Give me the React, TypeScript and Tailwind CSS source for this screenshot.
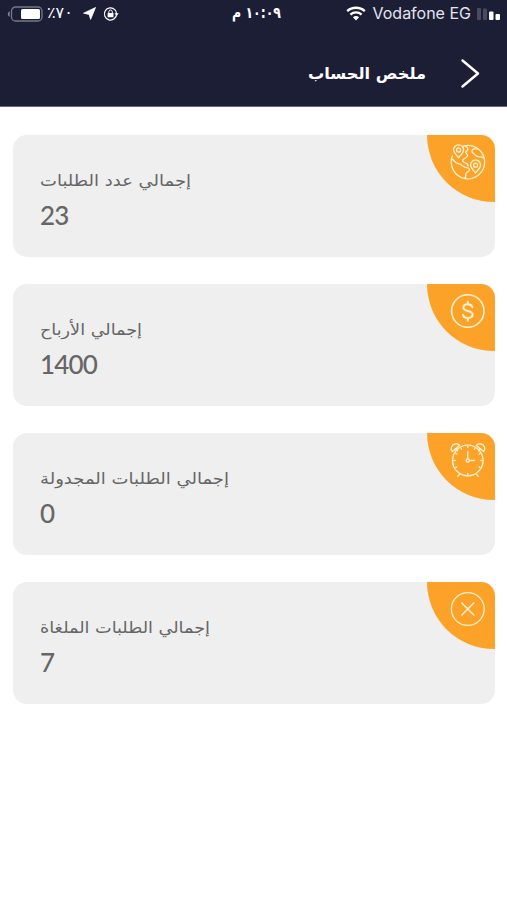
import type { ReactNode } from "react";

function BatteryIcon() {
  return (
    <svg width="36" height="16" viewBox="0 0 36 16" className="shrink-0">
      <path d="M2.6 5.2C.2 6.2.2 9.8 2.6 10.8Z" fill="#85869a" />
      <rect x="4.5" y="1" width="30.5" height="14" rx="4" fill="none" stroke="#77788b" strokeWidth="1.3" />
      <rect x="14" y="3" width="19" height="10" rx="1.5" fill="#fff" />
    </svg>
  );
}

function LocationIcon() {
  return (
    <svg width="13" height="13" viewBox="0 0 13 13" className="block shrink-0">
      <path d="M12.5.5 7.6 12.4 6.2 7.4.6 6.2Z" fill="#fff" stroke="#fff" strokeWidth=".8" strokeLinejoin="round" />
    </svg>
  );
}

function RotationLockIcon() {
  return (
    <svg width="16" height="16" viewBox="0 0 16 16" fill="none" stroke="#fff" className="block shrink-0">
      <path d="M13.6 8A6.1 6.1 0 1 1 11.8 3.6 6.1 6.1 0 0 1 13.6 8" strokeWidth="1.2" />
      <path d="M11.4 7.3h4.3l-2.1 2.6Z" fill="#fff" stroke="none" />
      <rect x="4.6" y="7" width="5.9" height="4.3" rx=".6" fill="#fff" stroke="none" />
      <path d="M5.8 7V5.8a1.75 1.75 0 0 1 3.5 0V7" strokeWidth="1" />
    </svg>
  );
}

function WifiIcon() {
  return (
    <svg width="20" height="15" viewBox="0 0 20 15" fill="none" stroke="#fff" className="shrink-0">
      <path d="M1.2 5.2C6 .6 14 .6 18.8 5.2" strokeWidth="2.3" />
      <path d="M4.4 8.6C7.5 5.7 12.5 5.7 15.6 8.6" strokeWidth="2.2" />
      <path d="M10 14.4 6.9 11.2c1.7-1.6 4.5-1.6 6.2 0Z" fill="#fff" stroke="none" />
    </svg>
  );
}

function SignalIcon() {
  return (
    <svg width="24" height="14" viewBox="0 0 24 14" className="shrink-0">
      <rect x="0" y="1" width="4" height="12" rx="1" fill="#4a4b60" />
      <rect x="6" y="1.5" width="4" height="11.5" rx="1" fill="#4a4b60" />
      <rect x="12" y="4.5" width="4.5" height="8.5" rx="1" fill="#fff" />
      <rect x="18.5" y="7" width="4.5" height="6" rx="1" fill="#fff" />
    </svg>
  );
}

function IconFrame({ children }: { children: ReactNode }) {
  return (
    <svg
      width="38"
      height="38"
      viewBox="0 0 38 38"
      fill="none"
      stroke="#fff2cf"
      strokeWidth="1.3"
      strokeLinecap="round"
      strokeLinejoin="round"
    >
      {children}
    </svg>
  );
}

function GlobeIcon() {
  return (
    <IconFrame>
      <path d="M14.5 3A16.7 16.7 0 1 1 3.4 13" />
      <path d="M9.6 14.8C7 11.4 4.6 9.6 4.6 6.8a5 5 0 0 1 10 0c0 2.8-2.4 4.6-5 8Z" />
      <circle cx="9.6" cy="7" r="2" />
      <path d="M26.6 30c-2.6-3.4-5-5.2-5-8a5 5 0 0 1 10 0c0 2.8-2.4 4.6-5 8Z" />
      <circle cx="26.6" cy="22.2" r="2" />
      <path d="M16 2.8c3.2 1.8 3.8 3.8 1.8 5.1-3.2 1.7 2 3.1.6 5.4-1.2 2.2-4.2 1.4-4.7 4.1-.4 3.2 6 1.8 5.4 5.5M29 6.2c-2.6-.8-5.5-.3-6.2 1.7-.7 2.2 2.9 2.5 3.8 4.5.9 1.6 3.4 1.3 5.4 1.5 1.6.1 2.1 1 3.2 1.7M3 16.3c2.7.7 2.8 3.7 5.7 4.1 3.5.4 4.6 2.5 6.7 3.6 2.2 1.2 4.5-.1 5.1 2.3.6 2.7-3.1 2.3-3.7 4.5-.3 1.5.6 2.5-.8 4.2" />
    </IconFrame>
  );
}

function DollarIcon() {
  return (
    <IconFrame>
      <circle cx="18.8" cy="19" r="16.2" strokeWidth="1.6" />
      <path d="M23.4 15.2c-.6-2-2.2-3-4.6-3-2.8 0-4.4 1.3-4.4 3.3 0 2.1 1.8 2.8 4.5 3.4 3 .7 4.7 1.6 4.7 3.7 0 2.1-1.8 3.3-4.6 3.3s-4.7-1.2-5.1-3.2M18.8 9.6v2.6M18.8 25.9v2.8" strokeWidth="2" />
    </IconFrame>
  );
}

function ClockIcon() {
  return (
    <IconFrame>
      <circle cx="18.8" cy="19.5" r="15.3" />
      <path d="M3.4 10.6C1 7.6 2.6 4.3 5.5 3.2c2-.8 3.9-.2 5 1.2L3.4 10.6ZM34.6 10.6c2.4-3 .8-6.3-2.1-7.4-2-.8-3.9-.2-5 1.2l7.1 6.2Z" />
      <path d="m6.5 7.8 2 2M31.5 7.8l-2 2M10.8 32.8l-2 2.6M27.2 32.8l2 2.6" />
      <circle cx="18.8" cy="19.5" r="1.6" />
      <path d="M18.8 17.6v-7.2M20.6 19.5h4.8M18.8 5v1.5M18.8 32.3v1.5M4.8 19.5h1.4M31.8 19.5h1.4M12 7.2l.6 1.1M26 7.2l-.6 1.1M6.7 12.4l1.2.7M31.3 12.4l-1.2.7M6.7 26.6l1.2-.7M31.3 26.6l-1.2-.7" />
    </IconFrame>
  );
}

function CancelIcon() {
  return (
    <IconFrame>
      <circle cx="18.8" cy="19" r="16.4" />
      <path d="m12.8 13 12 12M24.8 13 12.8 25" strokeWidth="1.5" />
    </IconFrame>
  );
}

const cards = [
  { label: "إجمالي عدد الطلبات", value: "23", icon: <GlobeIcon />, width: 151 },
  { label: "إجمالي الأرباح", value: "1400", icon: <DollarIcon />, width: 102 },
  { label: "إجمالي الطلبات المجدولة", value: "0", icon: <ClockIcon />, width: 189 },
  { label: "إجمالي الطلبات الملغاة", value: "7", icon: <CancelIcon />, width: 170 },
];

function FittedText({ text, width, size, weight }: { text: string; width: number; size: number; weight: number }) {
  return (
    <svg width={width} height="24" className="block shrink-0 overflow-visible" fill="currentColor">
      <text
        x={width}
        y="16"
        direction="rtl"
        textLength={width}
        lengthAdjust="spacingAndGlyphs"
        fontSize={size}
        fontWeight={weight}
        fontFamily="'DejaVu Sans', sans-serif"
      >
        {text}
      </text>
    </svg>
  );
}

export default function App() {
  return (
    <div className="h-[900px] w-[507px] overflow-hidden bg-white font-['DejaVu_Sans',sans-serif]">
      <header className="h-[107px] border-b border-[#696a78] bg-[#1c1e36] text-white">
        <div className="flex h-[27px] items-center justify-between pl-[7px] pr-[6px]">
          <div className="flex w-[190px] items-center">
            <BatteryIcon />
            <span className="ml-[4px] w-[28px] pb-[2px] text-[16px] leading-none whitespace-nowrap" dir="ltr">٪٧٠</span>
            <span className="ml-[8px]"><LocationIcon /></span>
            <span className="ml-[7px]"><RotationLockIcon /></span>
          </div>
          <div className="mr-[-4px] h-[24px]">
            <FittedText text="١٠:٠٩ م" width={49} size={15.5} weight={700} />
          </div>
          <div className="flex w-[190px] items-center justify-end">
            <WifiIcon />
            <span className="mr-[6px] ml-[7px] pb-[2px] font-[Inter,sans-serif] text-[16px] leading-none whitespace-nowrap text-[#e4e4ec]">Vodafone EG</span>
            <SignalIcon />
          </div>
        </div>
        <div className="flex items-center justify-end pt-[32px] pr-[27px]">
          <h1 className="mt-[2px] mr-[35px] h-6">
            <FittedText text="ملخص الحساب" width={118} size={16} weight={700} />
          </h1>
          <svg width="19" height="29" viewBox="0 0 19 29" fill="none" stroke="#fff" strokeWidth="2.4" strokeLinecap="round" strokeLinejoin="round">
            <path d="m1.5 1.5 15.5 13-15.5 13" />
          </svg>
        </div>
      </header>
      <main className="flex flex-col gap-[27px] pt-[28px] pr-[12px] pl-[13px]">
        {cards.map((card) => (
          <section key={card.value} className="flex h-[122px] justify-between overflow-hidden rounded-[14px] bg-[#efefef]">
            <div className="flex flex-col items-start pt-[35px] pl-[27px] text-[#666]">
              <FittedText text={card.label} width={card.width} size={16} weight={400} />
              <span className="mt-[7px] font-[Lato,sans-serif] text-[26px] leading-[28px] font-medium tracking-[-0.8px]">{card.value}</span>
            </div>
            <div className="flex h-[67px] w-[68px] items-start justify-end rounded-bl-[68px] bg-[#fda229] pt-[8px] pr-[8px]">
              {card.icon}
            </div>
          </section>
        ))}
      </main>
    </div>
  );
}
